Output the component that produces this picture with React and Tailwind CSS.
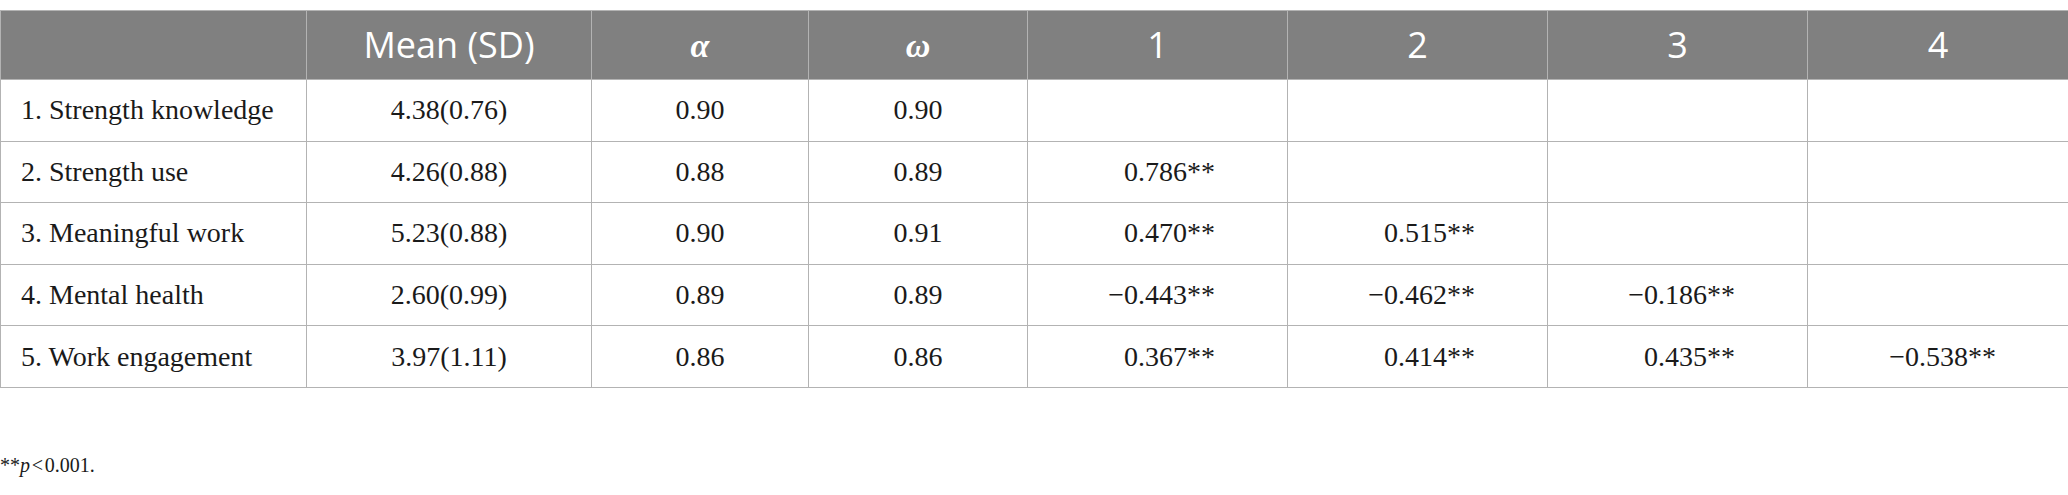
import React from 'react';

const cols = ['', 'Mean (SD)', 'α', 'ω', '1', '2', '3', '4'];

const rows = [
  { label: '1. Strength knowledge', mean: '4.38(0.76)', a: '0.90', w: '0.90', r: ['', '', '', ''] },
  { label: '2. Strength use', mean: '4.26(0.88)', a: '0.88', w: '0.89', r: ['0.786**', '', '', ''] },
  { label: '3. Meaningful work', mean: '5.23(0.88)', a: '0.90', w: '0.91', r: ['0.470**', '0.515**', '', ''] },
  { label: '4. Mental health', mean: '2.60(0.99)', a: '0.89', w: '0.89', r: ['\u22120.443**', '\u22120.462**', '\u22120.186**', ''] },
  { label: '5. Work engagement', mean: '3.97(1.11)', a: '0.86', w: '0.86', r: ['0.367**', '0.414**', '0.435**', '\u22120.538**'] },
];

const App = () => {
  return (
    <div className="w-[2068px] h-[495px] bg-white pt-[10px]">
      <table className="w-[2068px] table-fixed border-collapse border border-[#b3b3b3] text-[#1a1a1a] font-['Liberation_Serif',serif]">
        <colgroup>
          <col className="w-[306px]" />
          <col className="w-[285px]" />
          <col className="w-[217px]" />
          <col className="w-[219px]" />
          <col className="w-[260px]" />
          <col className="w-[260px]" />
          <col className="w-[260px]" />
          <col className="w-[261px]" />
        </colgroup>
        <thead>
          <tr className="h-[69px] bg-[#808080]">
            {cols.map((c, i) => (
              <th
                key={i}
                className={`border border-[#b3b3b3] text-center text-white ${
                  i === 2 || i === 3
                    ? "font-['Liberation_Serif',serif] italic font-bold text-[34px]"
                    : "font-['Open_Sans',sans-serif] font-normal text-[36px]"
                }`}
              >
                {c}
              </th>
            ))}
          </tr>
        </thead>
        <tbody className="text-[28px]">
          {rows.map((row) => (
            <tr key={row.label} className="h-[61.6px]">
              <td className="border border-[#b3b3b3] pl-[20px] text-left">{row.label}</td>
              <td className="border border-[#b3b3b3] text-center">{row.mean}</td>
              <td className="border border-[#b3b3b3] text-center">{row.a}</td>
              <td className="border border-[#b3b3b3] text-center">{row.w}</td>
              {row.r.map((v, j) => (
                <td key={j} className="border border-[#b3b3b3] text-right pr-[72px]">{v}</td>
              ))}
            </tr>
          ))}
        </tbody>
      </table>
      <p className="mt-[62px] text-[20px] text-[#1a1a1a] font-['Liberation_Serif',serif]">
        **<span className="italic">p</span>{'\u200a<\u200a'}0.001.
      </p>
    </div>
  );
};

export default App;
